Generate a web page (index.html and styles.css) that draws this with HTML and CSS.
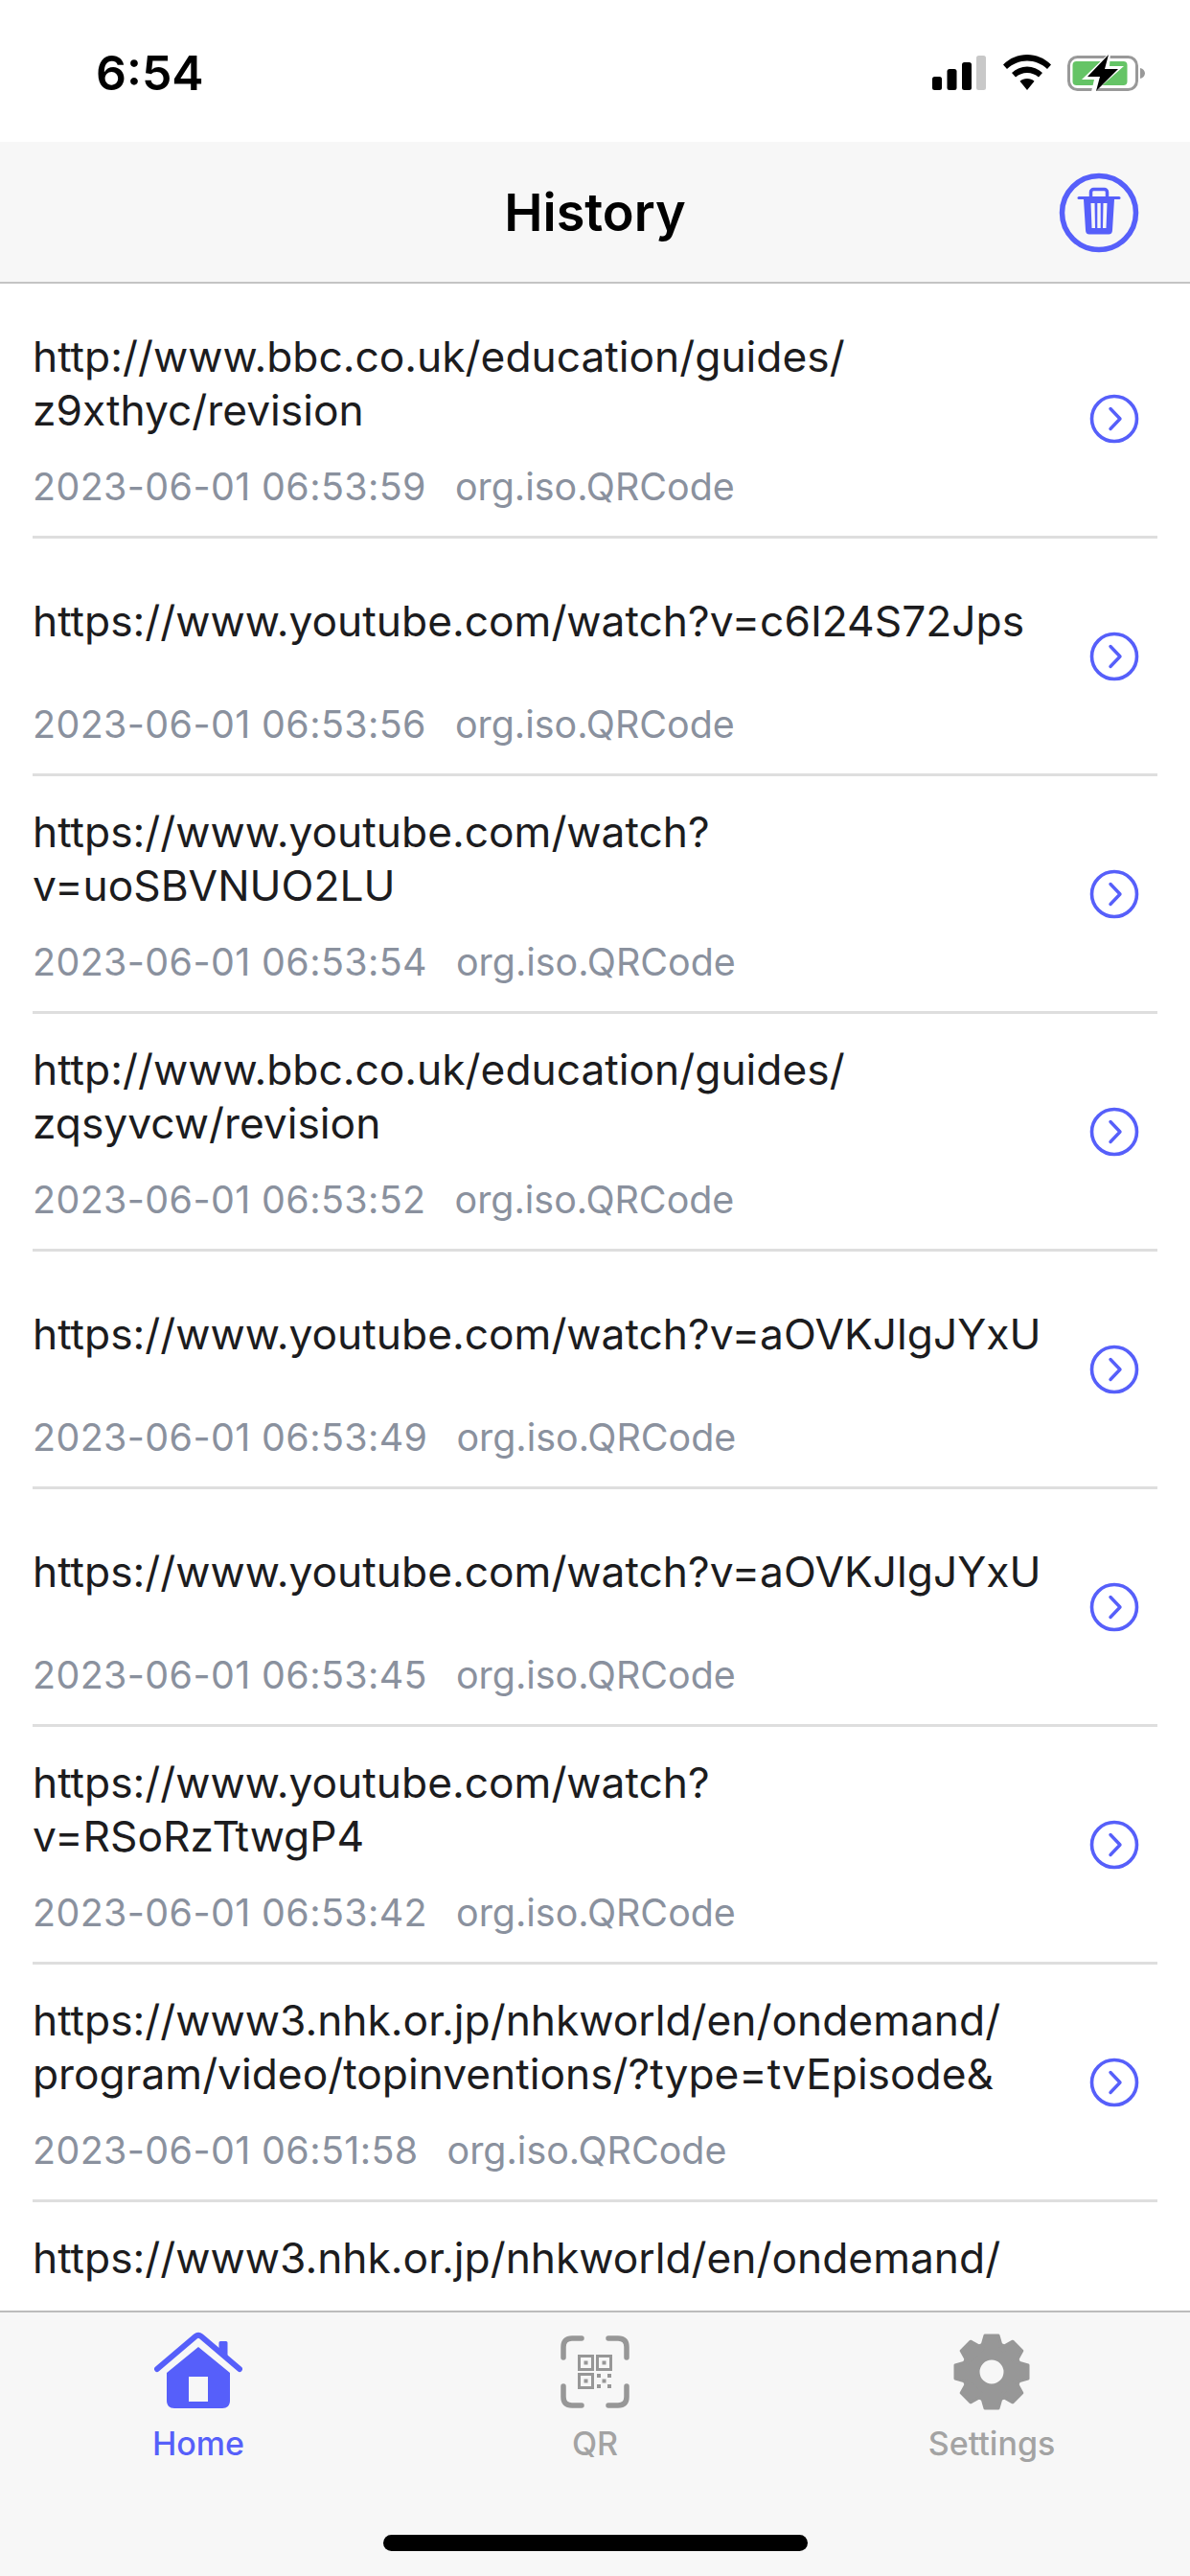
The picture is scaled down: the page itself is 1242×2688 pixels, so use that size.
FILE: index.html
```html
<!DOCTYPE html>
<html lang="en">

<head>
    <meta charset="UTF-8">
    <title>History</title>
    <link rel="stylesheet" href="styles.css">
</head>

<body>
    <svg class="defs" width="0" height="0">
        <symbol id="chevron" viewBox="0 0 52 52">
            <circle cx="26" cy="26" r="23.5" fill="none" stroke="#565ffa" stroke-width="3.6"/>
            <path d="M22 15.5L32 26L22 36.5" fill="none" stroke="#565ffa" stroke-width="3.4" stroke-linecap="round" stroke-linejoin="round"/>
        </symbol>
    </svg>

    <div class="phone">
        <!-- status bar -->
        <div class="status">
            <span class="time">6:54</span>
            <div class="status-icons">
                <svg class="signal" width="57" height="36" viewBox="0 0 57 36">
                    <rect x="0" y="22" width="10" height="14" rx="2.5"/>
                    <rect x="15.500" y="14" width="10" height="22" rx="2.5"/>
                    <rect x="31" y="7" width="10" height="29" rx="2.5"/>
                    <rect x="46" y="0" width="10" height="36" rx="2.5" fill="#c8c8c8"/>
                </svg>
                <svg class="wifi" width="50" height="37" viewBox="0 0 50 37">
                    <path d="M25 0C15.500 0 7 3.500 0 10.500L4 15C10 9.500 17 6.500 25 6.500S40 9.500 46 15L50 10.500C43 3.500 34.500 0 25 0Z"/>
                    <path d="M25 12.500C19 12.500 13.500 14.800 9 19L13 23.500C16.500 20.500 20.500 19 25 19S33.500 20.500 37 23.500L41 19C36.500 14.800 31 12.500 25 12.500Z"/>
                    <path d="M25 25C22 25 19.500 26 17.500 27.800L25 37L32.500 27.800C30.500 26 28 25 25 25Z"/>
                </svg>
                <svg class="battery" width="82" height="40" viewBox="0 0 82 40">
                    <rect x="1.500" y="2.500" width="71" height="34" rx="9" fill="none" stroke="#999" stroke-width="3"/>
                    <path d="M76 14C79 14.500 81 17 81 19.500S79 24.500 76 25Z" fill="#999"/>
                    <rect x="5.500" y="7" width="57" height="25" rx="4" fill="#65c466"/>
                    <path d="M45 -3L15 26H28L24 43L59 12H44Z" fill="#fff"/>
                    <path d="M43 0L21 23H34L30 38L53 15H39Z" fill="#000"/>
                </svg>
            </div>
        </div>

        <!-- nav bar -->
        <div class="nav">
            <h1 class="nav-title">History</h1>
            <svg class="trash" width="84" height="84" viewBox="0 0 84 84">
                <circle cx="42" cy="42" r="38.500" fill="none" stroke="#565ffa" stroke-width="5.500"/>
                <path d="M21 26.500H63" fill="none" stroke="#565ffa" stroke-width="3" stroke-linecap="round"/>
                <path d="M33.500 25V20.500C33.500 18.500 35 17.500 36.500 17.500H47.500C49 17.500 50.500 18.500 50.500 20.500V25" fill="none" stroke="#565ffa" stroke-width="3.500"/>
                <path fill-rule="evenodd" fill="#565ffa" d="M26 28H58L56 60C56 63 54.500 64.500 52 64.500H32C29.500 64.500 28 63 28 60ZM33.500 32L34.500 58H38L37.500 32ZM40.300 32V58H43.700V32ZM46.500 32L46 58H49.500L50.500 32Z"/>
            </svg>
        </div>

        <!-- history list -->
        <ul class="list">
            <li class="row">
                <div class="row-main">
                    <div class="row-url">http://www.bbc.co.uk/education/guides/<br>z9xthyc/revision</div>
                    <div class="row-meta"><span class="row-date">2023-06-01 06:53:59</span><span>org.iso.QRCode</span></div>
                </div>
                <svg class="row-arrow"><use href="#chevron"/></svg>
            </li>
            <li class="row">
                <div class="row-main">
                    <div class="row-url">https://www.youtube.com/watch?v=c6I24S72Jps</div>
                    <div class="row-meta"><span class="row-date">2023-06-01 06:53:56</span><span>org.iso.QRCode</span></div>
                </div>
                <svg class="row-arrow"><use href="#chevron"/></svg>
            </li>
            <li class="row">
                <div class="row-main">
                    <div class="row-url">https://www.youtube.com/watch?<br>v=uoSBVNUO2LU</div>
                    <div class="row-meta"><span class="row-date">2023-06-01 06:53:54</span><span>org.iso.QRCode</span></div>
                </div>
                <svg class="row-arrow"><use href="#chevron"/></svg>
            </li>
            <li class="row">
                <div class="row-main">
                    <div class="row-url">http://www.bbc.co.uk/education/guides/<br>zqsyvcw/revision</div>
                    <div class="row-meta"><span class="row-date">2023-06-01 06:53:52</span><span>org.iso.QRCode</span></div>
                </div>
                <svg class="row-arrow"><use href="#chevron"/></svg>
            </li>
            <li class="row">
                <div class="row-main">
                    <div class="row-url">https://www.youtube.com/watch?v=aOVKJlgJYxU</div>
                    <div class="row-meta"><span class="row-date">2023-06-01 06:53:49</span><span>org.iso.QRCode</span></div>
                </div>
                <svg class="row-arrow"><use href="#chevron"/></svg>
            </li>
            <li class="row">
                <div class="row-main">
                    <div class="row-url">https://www.youtube.com/watch?v=aOVKJlgJYxU</div>
                    <div class="row-meta"><span class="row-date">2023-06-01 06:53:45</span><span>org.iso.QRCode</span></div>
                </div>
                <svg class="row-arrow"><use href="#chevron"/></svg>
            </li>
            <li class="row">
                <div class="row-main">
                    <div class="row-url">https://www.youtube.com/watch?<br>v=RSoRzTtwgP4</div>
                    <div class="row-meta"><span class="row-date">2023-06-01 06:53:42</span><span>org.iso.QRCode</span></div>
                </div>
                <svg class="row-arrow"><use href="#chevron"/></svg>
            </li>
            <li class="row">
                <div class="row-main">
                    <div class="row-url">https://www3.nhk.or.jp/nhkworld/en/ondemand/<br>program/video/topinventions/?type=tvEpisode&amp;</div>
                    <div class="row-meta"><span class="row-date">2023-06-01 06:51:58</span><span>org.iso.QRCode</span></div>
                </div>
                <svg class="row-arrow"><use href="#chevron"/></svg>
            </li>
            <li class="row row-cut">
                <div class="row-main">
                    <div class="row-url">https://www3.nhk.or.jp/nhkworld/en/ondemand/</div>
                </div>
            </li>
        </ul>

        <!-- tab bar -->
        <div class="tabs">
            <div class="tab tab-active">
                <svg class="tab-icon" width="92" height="82" viewBox="0 0 92 82">
                    <path d="M3 39L43 5C44.800 3.500 47.200 3.500 49 5L89 39" fill="none" stroke="#565ffa" stroke-width="6" stroke-linecap="round" stroke-linejoin="round"/>
                    <path d="M69 11.500H75V26L69 21Z" fill="#565ffa" stroke="#565ffa" stroke-width="3" stroke-linejoin="round"/>
                    <path fill-rule="evenodd" fill="#565ffa" d="M46 16L79 43V72C79 77 76 80 71 80H21C16 80 13 77 13 72V43ZM36 47V73H56V47Z"/>
                </svg>
                <span class="tab-label">Home</span>
            </div>
            <div class="tab">
                <svg class="tab-icon tab-icon-qr" width="72" height="76" viewBox="0 0 72 76">
                    <g fill="none" stroke="#979797" stroke-width="5.500" stroke-linecap="round">
                        <path d="M3 23V12C3 6 6 3 12 3H22"/>
                        <path d="M50 3H60C66 3 69 6 69 12V23"/>
                        <path d="M3 53V64C3 70 6 73 12 73H22"/>
                        <path d="M50 73H60C66 73 69 70 69 64V53"/>
                    </g>
                    <g fill="none" stroke="#979797" stroke-width="3">
                        <rect x="19.500" y="21.500" width="14" height="14"/>
                        <rect x="38.500" y="21.500" width="14" height="14"/>
                        <rect x="19.500" y="40.500" width="14" height="14"/>
                    </g>
                    <g fill="#979797">
                        <rect x="24.500" y="26.500" width="4" height="4"/>
                        <rect x="43.500" y="26.500" width="4" height="4"/>
                        <rect x="24.500" y="45.500" width="4" height="4"/>
                        <rect x="38" y="40" width="4" height="4"/>
                        <rect x="49" y="40" width="4" height="4"/>
                        <rect x="43.500" y="45.500" width="4" height="4"/>
                        <rect x="38" y="51" width="4" height="4"/>
                        <rect x="49" y="51" width="4" height="4"/>
                    </g>
                </svg>
                <span class="tab-label">QR</span>
            </div>
            <div class="tab">
                <svg class="tab-icon tab-icon-gear" width="80" height="80" viewBox="0 0 80 80">
                    <circle cx="40" cy="40" r="22" fill="none" stroke="#979797" stroke-width="19"/>
                    <g fill="#979797" stroke="#979797" stroke-width="3" stroke-linejoin="round">
                        <path d="M29 16L33 2H47L51 16Z"/>
                        <path d="M29 16L33 2H47L51 16Z" transform="rotate(45 40 40)"/>
                        <path d="M29 16L33 2H47L51 16Z" transform="rotate(90 40 40)"/>
                        <path d="M29 16L33 2H47L51 16Z" transform="rotate(135 40 40)"/>
                        <path d="M29 16L33 2H47L51 16Z" transform="rotate(180 40 40)"/>
                        <path d="M29 16L33 2H47L51 16Z" transform="rotate(225 40 40)"/>
                        <path d="M29 16L33 2H47L51 16Z" transform="rotate(270 40 40)"/>
                        <path d="M29 16L33 2H47L51 16Z" transform="rotate(315 40 40)"/>
                    </g>
                </svg>
                <span class="tab-label">Settings</span>
            </div>
            <div class="home-bar"></div>
        </div>
    </div>
</body>

</html>
```

FILE: styles.css
```css
body {
    font-family: Inter, "Liberation Sans", sans-serif;
    background-color: #fff;
    margin: 0;
    padding: 0;
}

.defs {
    position: absolute;
}

.phone {
    width: 1242px;
    height: 2688px;
    display: flex;
    flex-direction: column;
    overflow: hidden;
}

.status {
    height: 148px;
    flex: none;
    display: flex;
    justify-content: space-between;
    align-items: flex-start;
    padding: 0 46px 0 100px;
    box-sizing: border-box;
}

.time {
    margin-top: 45px;
    font-size: 50px;
    line-height: 62px;
    font-weight: 600;
    color: #000;
}

.status-icons {
    display: flex;
    align-items: flex-start;
    gap: 17px;
    margin-top: 58px;
}

.wifi {
    margin-top: -1px;
}

.battery {
    margin-top: -1px;
}

.nav {
    height: 148px;
    flex: none;
    display: flex;
    align-items: center;
    justify-content: center;
    position: relative;
    background-color: #f7f7f7;
    border-bottom: 2px solid #c4c4c4;
    box-sizing: border-box;
}

.nav-title {
    margin: 0;
    font-size: 54px;
    font-weight: 600;
    color: #000;
}

.trash {
    position: absolute;
    right: 53px;
    top: 32px;
}

.list {
    flex: 1;
    min-height: 0;
    list-style: none;
    margin: 0;
    padding: 18px 34px 0;
    overflow: hidden;
}

.row {
    height: 248px;
    display: flex;
    align-items: center;
    box-sizing: border-box;
    border-bottom: 3px solid #dedede;
}

.row-cut {
    border-bottom: none;
}

.row-main {
    flex: 1;
    padding-top: 30px;
    align-self: flex-start;
}

.row-url {
    min-height: 112px;
    display: flex;
    align-items: center;
    font-size: 44.3px;
    line-height: 56px;
    color: #1c1c1e;
}

.row-cut .row-url {
    min-height: 0;
}

.row-meta {
    display: flex;
    gap: 30px;
    margin-top: 32px;
    font-size: 39.4px;
    line-height: 40px;
    color: #8a919e;
}

.row-date {
    letter-spacing: 0.4px;
}

.row-arrow {
    width: 52px;
    height: 52px;
    flex: none;
    margin-right: 19px;
}

.tabs {
    height: 277px;
    flex: none;
    display: grid;
    grid-template-columns: repeat(3, 1fr);
    position: relative;
    background-color: #f7f7f7;
    border-top: 2px solid #bcbcbc;
    box-sizing: border-box;
}

.tab {
    display: flex;
    flex-direction: column;
    align-items: center;
    height: 157px;
    padding-top: 20px;
    box-sizing: border-box;
    justify-content: space-between;
}

.tab-icon {
    flex: none;
}

.tab-icon-qr {
    margin-top: 4px;
}

.tab-icon-gear {
    margin-top: 2px;
}

.tab-label {
    font-size: 34px;
    line-height: 40px;
    font-weight: 500;
    color: #a3a3a3;
}

.tab-active .tab-label {
    color: #565ffa;
}

.home-bar {
    position: absolute;
    left: 400px;
    bottom: 26px;
    width: 443px;
    height: 17px;
    border-radius: 9px;
    background-color: #000;
}
```
